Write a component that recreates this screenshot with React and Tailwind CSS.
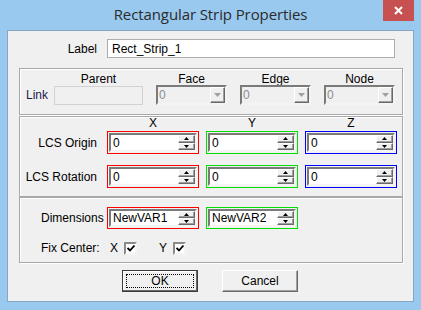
import React from 'react';

const sunken = 'border-2 border-t-[#7a7a7a] border-l-[#7a7a7a] border-b-[#f4f4f4] border-r-[#f4f4f4]';
const raised = 'border border-t-white border-l-white border-b-[#696969] border-r-[#696969] shadow-[inset_-1px_-1px_0_#a0a0a0]';

const SpinArrows = () => (
  <div className="flex flex-col w-[17px] h-full">
    <div className={`flex-1 flex items-center justify-center bg-[#f0f0f0] ${raised}`}>
      <svg width="5" height="3" viewBox="0 0 5 3"><path d="M2.5 0 L5 3 L0 3 Z" fill="#000" /></svg>
    </div>
    <div className={`flex-1 flex items-center justify-center bg-[#f0f0f0] ${raised}`}>
      <svg width="5" height="3" viewBox="0 0 5 3"><path d="M0 0 L5 0 L2.5 3 Z" fill="#000" /></svg>
    </div>
  </div>
);

// coloured frame (1px background), a 1px light gap, then the sunken edit with spin buttons
const SpinBox = ({ color, value, h = 'h-[23px]' }) => (
  <div className={`w-[92px] ${h} p-[1px] ${color} flex`}>
    <div className="flex-1 flex p-[1px] bg-[#f0f0f0]">
      <div className={`flex-1 flex bg-white ${sunken}`}>
        <div className="flex-1 flex items-center pl-[2px] text-[12px] text-black">{value}</div>
        <SpinArrows />
      </div>
    </div>
  </div>
);

const Dropdown = () => (
  <div className={`w-[71px] h-[20px] flex bg-[#f0f0f0] ${sunken}`}>
    <div className="flex-1 flex items-center pl-[1px] text-[12px] text-[#8c8c8c]">0</div>
    <div className={`w-[15px] h-full flex items-center justify-center bg-[#f0f0f0] ${raised}`}>
      <svg width="7" height="4" viewBox="0 0 7 4"><path d="M0 0 L7 0 L3.5 4 Z" fill="#a0a0a0" /></svg>
    </div>
  </div>
);

const Check = () => (
  <div className="w-[13px] h-[13px] bg-white flex items-center justify-center border-2 border-t-[#8a8a8a] border-l-[#8a8a8a] border-b-[#f4f4f4] border-r-[#f4f4f4]">
    <svg width="8" height="7" viewBox="0 0 8 7"><path d="M0.5 3 L3 5.5 L7.5 0.5" stroke="#000" strokeWidth="1.8" fill="none" /></svg>
  </div>
);

const groupBox = 'border border-[#a8a8a8] shadow-[inset_1px_1px_0_#fff,1px_1px_0_#fff] w-[384px]';

export default function App() {
  return (
    <div className="w-[421px] h-[310px] bg-[#99c9ef] flex flex-col font-['Liberation_Sans',sans-serif] text-[11px] text-black">
      {/* title bar */}
      <div className="h-[30px] relative flex items-center justify-center pb-[1px]">
        <span className="text-[15px] text-[#2b2b2b] font-['Open_Sans',sans-serif] tracking-[-0.1px]">Rectangular Strip Properties</span>
        <div className="absolute right-[7px] top-0 w-[31px] h-[21px] bg-[#c75050] flex items-center justify-center">
          <svg width="9" height="9" viewBox="0 0 9 9"><path d="M1 1 L8 8 M8 1 L1 8" stroke="#fff" strokeWidth="2" /></svg>
        </div>
      </div>

      {/* client */}
      <div className="mx-[7px] h-[272px] bg-[#f0f0f0] border border-[#86a6c4] flex flex-col">
        <div className="flex items-center pt-[8px]">
          <span className="w-[89px] text-right text-[12px]">Label</span>
          <div className="ml-[10px] w-[288px] h-[19px] bg-white border border-[#abadb3] flex items-center pl-[4px] text-[12px]">Rect_Strip_1</div>
        </div>

        {/* link group */}
        <div className={`${groupBox} ml-[11px] mt-[10px] h-[47px] flex flex-col`}>
          <div className="flex pt-[1px] h-[16px] text-[12px]">
            <span className="ml-[34px] w-[89px] text-center">Parent</span>
            <span className="ml-[13px] w-[71px] text-center">Face</span>
            <span className="ml-[13px] w-[71px] text-center">Edge</span>
            <span className="ml-[13px] w-[71px] text-center">Node</span>
          </div>
          <div className="flex items-center">
            <span className="w-[34px] pl-[6px] text-[12px] text-[#1b1b4d]">Link</span>
            <div className="w-[89px] h-[19px] bg-[#f0f0f0] border border-[#d2d2d2]" />
            <div className="ml-[13px]"><Dropdown /></div>
            <div className="ml-[13px]"><Dropdown /></div>
            <div className="ml-[13px]"><Dropdown /></div>
          </div>
        </div>

        {/* LCS group */}
        <div className={`${groupBox} ml-[11px] mt-[1px] h-[81px] flex flex-col`}>
          <div className="flex h-[14px] text-[12px] leading-[13px]">
            <span className="ml-[87px] w-[92px] text-center">X</span>
            <span className="ml-[7px] w-[92px] text-center">Y</span>
            <span className="ml-[7px] w-[92px] text-center">Z</span>
          </div>
          <div className="flex items-center">
            <span className="w-[77px] text-right text-[12px]">LCS Origin</span>
            <div className="ml-[10px] flex gap-[7px]">
              <SpinBox color="bg-[#ff0000]" value="0" />
              <SpinBox color="bg-[#00e000]" value="0" />
              <SpinBox color="bg-[#0000ff]" value="0" />
            </div>
          </div>
          <div className="flex items-center mt-[11px]">
            <span className="w-[77px] text-right text-[12px]">LCS Rotation</span>
            <div className="ml-[10px] flex gap-[7px]">
              <SpinBox color="bg-[#ff0000]" value="0" />
              <SpinBox color="bg-[#00e000]" value="0" />
              <SpinBox color="bg-[#0000ff]" value="0" />
            </div>
          </div>
        </div>

        {/* dimensions group */}
        <div className={`${groupBox} ml-[11px] h-[66px] flex flex-col`}>
          <div className="flex items-center mt-[9px]">
            <span className="w-[87px] pl-[21px] text-[12px]">Dimensions</span>
            <div className="flex gap-[7px]">
              <SpinBox color="bg-[#ff0000]" value="NewVAR1" h="h-[22px]" />
              <SpinBox color="bg-[#00e000]" value="NewVAR2" h="h-[22px]" />
            </div>
          </div>
          <div className="flex items-center mt-[10px] text-[12px]">
            <span className="w-[90px] pl-[21px]">Fix Center:</span>
            <span className="w-[14px]">X</span>
            <Check />
            <span className="ml-[22px] w-[14px]">Y</span>
            <Check />
          </div>
        </div>

        {/* buttons */}
        <div className="flex mt-[7px] ml-[114px] gap-[24px] text-[12px]">
          <div className="w-[76px] h-[22px] border border-[#3c3c3c] bg-[#f0f0f0] flex p-[3px] shadow-[inset_-1px_-1px_0_#696969,inset_1px_1px_0_#fff]">
            <div className="flex-1 border border-dotted border-black flex items-center justify-center">OK</div>
          </div>
          <div className={`w-[76px] h-[22px] bg-[#f0f0f0] flex items-center justify-center ${raised}`}>Cancel</div>
        </div>
      </div>
    </div>
  );
}
